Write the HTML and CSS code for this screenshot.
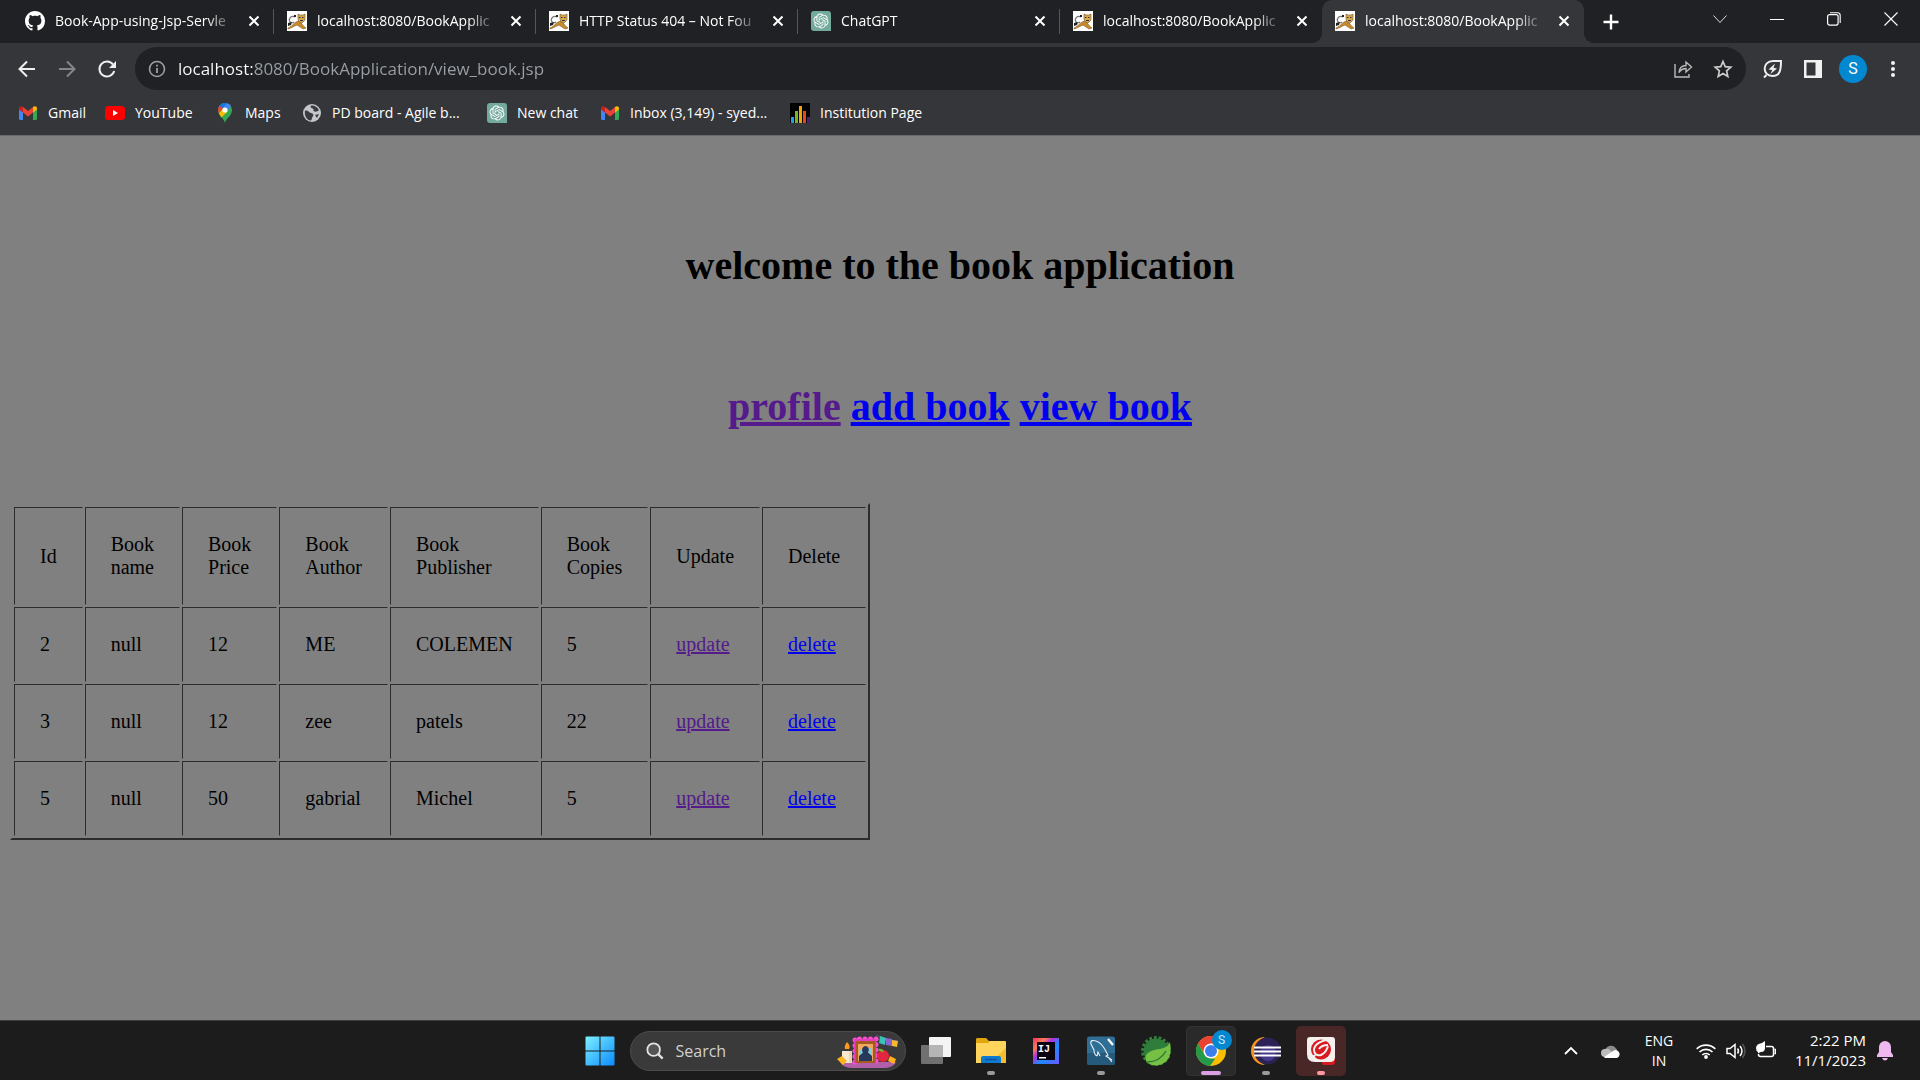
FILE: index.html
```html
<!DOCTYPE html>
<html lang="en">
<head>
<meta charset="utf-8">
<title>Book Application</title>
<link rel="stylesheet" href="styles.css">
</head>
<body>
<svg class="defs" aria-hidden="true">
  <symbol id="cat" viewBox="0 0 20 20">
    <path fill="#fff" d="M0 0h20v20H0z"/>
    <path fill="none" stroke="#777" stroke-width="1.2" d="M8 6C4 4 1 8 3 11c1 1 3 1 4 0"/>
    <path fill="#222" d="M1 12l4-1-1 3-3 1zM7 4h2v2H7z"/>
    <path fill="#c98a2b" stroke="#7a5a2a" stroke-width=".6" d="M1 17c3-1 5-4 8-6l3-1 3 3c1 2 3 3 4 4l-3 1c-2-1-4-3-6-4-3 1-5 3-9 4z"/>
    <path fill="#dba94a" stroke="#6b5632" stroke-width=".6" d="M11 3l2 1h3l2-1v6l-3 3-3-1-1-3z"/>
    <path fill="#333" d="M12 6h1.500v1H12zM15 6h1.500v1H15zM13 9h3v1h-3z"/>
  </symbol>
  <symbol id="gpt" viewBox="0 0 40 40">
    <path fill="#74aa9c" d="M6 0h28q6 0 6 6v34H6q-6 0-6-6V6q0-6 6-6z"/>
    <path fill="#fff" transform="translate(5 5) scale(1.25)" d="M22.2819 9.8211a5.9847 5.9847 0 0 0-.5157-4.9108 6.0462 6.0462 0 0 0-6.5098-2.9A6.0651 6.0651 0 0 0 4.9807 4.1818a5.9847 5.9847 0 0 0-3.9977 2.9 6.0462 6.0462 0 0 0 .7427 7.0966 5.98 5.98 0 0 0 .511 4.9107 6.051 6.051 0 0 0 6.5146 2.9001A5.9847 5.9847 0 0 0 13.2599 24a6.0557 6.0557 0 0 0 5.7718-4.2058 5.9894 5.9894 0 0 0 3.9977-2.9001 6.0557 6.0557 0 0 0-.7475-7.0729zm-9.022 12.6081a4.4755 4.4755 0 0 1-2.8764-1.0408l.1419-.0804 4.7783-2.7582a.7948.7948 0 0 0 .3927-.6813v-6.7369l2.02 1.1686a.071.071 0 0 1 .038.052v5.5826a4.504 4.504 0 0 1-4.4945 4.4944zm-9.6607-4.1254a4.4708 4.4708 0 0 1-.5346-3.0137l.142.0852 4.783 2.7582a.7712.7712 0 0 0 .7806 0l5.8428-3.3685v2.3324a.0804.0804 0 0 1-.0332.0615L9.74 19.9502a4.4992 4.4992 0 0 1-6.1408-1.6464zM2.3408 7.8956a4.485 4.485 0 0 1 2.3655-1.9728V11.6a.7664.7664 0 0 0 .3879.6765l5.8144 3.3543-2.0201 1.1685a.0757.0757 0 0 1-.071 0l-4.8303-2.7865A4.504 4.504 0 0 1 2.3408 7.872zm16.5963 3.8558L13.1038 8.364 15.1192 7.2a.0757.0757 0 0 1 .071 0l4.8303 2.7913a4.4944 4.4944 0 0 1-.6765 8.1042v-5.6772a.79.79 0 0 0-.407-.667zm2.0107-3.0231l-.142-.0852-4.7735-2.7818a.7759.7759 0 0 0-.7854 0L9.409 9.2297V6.8974a.0662.0662 0 0 1 .0284-.0615l4.8303-2.7866a4.4992 4.4992 0 0 1 6.6802 4.66zM8.3065 12.863l-2.02-1.1638a.0804.0804 0 0 1-.038-.0567V6.0742a4.4992 4.4992 0 0 1 7.3757-3.4537l-.142.0805L8.704 5.459a.7948.7948 0 0 0-.3927.6813zm1.0976-2.3654l2.602-1.4998 2.6069 1.4998v2.9994l-2.5974 1.4997-2.6067-1.4997Z"/>
  </symbol>
  <symbol id="gmail" viewBox="0 0 20 20">
    <path fill="#4285f4" d="M1 6l4 3v8H2.300Q1 17 1 15.700z"/>
    <path fill="#34a853" d="M19 6l-4 3v8h2.700Q19 17 19 15.700z"/>
    <path fill="#ea4335" d="M5 4l5 4 5-4v5.500l-5 4-5-4z"/>
    <path fill="#c5221f" d="M1 5.500C1 3 3.500 2.800 5 4v5.500L1 6.500z"/>
    <path fill="#fbbc04" d="M19 5.500C19 3 16.500 2.800 15 4v5.500l4-3z"/>
  </symbol>
  <symbol id="close" viewBox="0 0 12 12"><path fill="none" stroke="#fff" stroke-width="2" d="M1.500 1.500l9 9m0-9l-9 9"/></symbol>
</svg>

<header class="browser">
  <nav class="tabs" aria-label="Tabs">
    <div class="tab">
      <svg class="ico" viewBox="0 0 16 16"><path fill="#fff" d="M8 0C3.580 0 0 3.580 0 8c0 3.540 2.290 6.530 5.470 7.590.4.070.550-.170.550-.380 0-.190-.010-.820-.010-1.490-2.010.370-2.530-.490-2.690-.940-.090-.230-.480-.940-.820-1.130-.280-.150-.680-.520-.010-.530.630-.010 1.080.580 1.230.820.720 1.210 1.870.870 2.330.660.070-.520.280-.870.510-1.070-1.780-.2-3.640-.890-3.640-3.950 0-.870.310-1.590.820-2.150-.080-.2-.360-1.020.080-2.120 0 0 .670-.210 2.200.820.640-.180 1.320-.270 2-.270s1.360.090 2 .270c1.530-1.040 2.200-.820 2.200-.820.440 1.100.160 1.920.080 2.120.510.560.820 1.270.820 2.150 0 3.070-1.870 3.750-3.650 3.950.290.250.540.730.540 1.480 0 1.070-.010 1.930-.010 2.200 0 .210.150.460.550.380A8.010 8.010 0 0 0 16 8c0-4.420-3.580-8-8-8z"/></svg>
      <span class="title">Book-App-using-Jsp-Servle</span>
      <button class="close" aria-label="Close tab"><svg><use href="#close"/></svg></button>
    </div>
    <div class="tab"><svg class="ico"><use href="#cat"/></svg><span class="title">localhost:8080/BookApplic</span><button class="close" aria-label="Close tab"><svg><use href="#close"/></svg></button></div>
    <div class="tab"><svg class="ico"><use href="#cat"/></svg><span class="title">HTTP Status 404 – Not Fou</span><button class="close" aria-label="Close tab"><svg><use href="#close"/></svg></button></div>
    <div class="tab"><svg class="ico"><use href="#gpt"/></svg><span class="title">ChatGPT</span><button class="close" aria-label="Close tab"><svg><use href="#close"/></svg></button></div>
    <div class="tab last"><svg class="ico"><use href="#cat"/></svg><span class="title">localhost:8080/BookApplic</span><button class="close" aria-label="Close tab"><svg><use href="#close"/></svg></button></div>
    <div class="tab active"><svg class="ico"><use href="#cat"/></svg><span class="title">localhost:8080/BookApplic</span><button class="close" aria-label="Close tab"><svg><use href="#close"/></svg></button></div>
    <button class="newtab" aria-label="New tab"><svg viewBox="0 0 16 16"><path stroke="#fff" stroke-width="2.400" d="M8 .5v15M.5 8h15"/></svg></button>
    <div class="winctl">
      <button aria-label="Search tabs"><svg viewBox="0 0 14 14"><path fill="none" stroke="#ddd" d="M.5 3.500l6.500 7 6.500-7"/></svg></button>
      <button aria-label="Minimize"><svg viewBox="0 0 14 14"><path stroke="#fff" d="M0 7.500h14"/></svg></button>
      <button aria-label="Restore"><svg viewBox="0 0 14 14"><rect x=".6" y="2.600" width="10.500" height="10.500" rx="2" fill="none" stroke="#fff" stroke-width="1.200"/><path fill="none" stroke="#fff" stroke-width="1.100" d="M3 .8h7.500q2.700 0 2.700 2.700V11"/></svg></button>
      <button aria-label="Close window"><svg viewBox="0 0 14 14"><path stroke="#fff" stroke-width="1.100" d="M.5.5l13 13m0-13l-13 13"/></svg></button>
    </div>
  </nav>

  <div class="toolbar">
    <div class="navbtns">
      <button aria-label="Back"><svg viewBox="0 0 20 20"><path fill="none" stroke="#eee" stroke-width="2" d="M18 10H3M10 2.500L2.500 10l7.500 7.500"/></svg></button>
      <button aria-label="Forward"><svg viewBox="0 0 20 20"><path fill="none" stroke="#85868a" stroke-width="2" d="M2 10h15M10 2.500l7.500 7.500-7.500 7.500"/></svg></button>
      <button aria-label="Reload"><svg viewBox="0 0 20 20"><path fill="none" stroke="#eee" stroke-width="2" d="M17.200 12A7.500 7.500 0 1 1 16 5.500"/><path fill="#eee" d="M19 2v7h-7z"/></svg></button>
    </div>
    <div class="omnibox">
      <svg class="info" viewBox="0 0 20 20"><circle cx="10" cy="10" r="7.500" fill="none" stroke="#9aa0a6" stroke-width="1.600"/><path stroke="#9aa0a6" stroke-width="1.800" d="M10 9v5M10 5.800v1.800"/></svg>
      <input class="url" type="text" aria-label="Address" value="localhost:8080/BookApplication/view_book.jsp">
      <button aria-label="Share"><svg viewBox="0 0 20 20"><path fill="none" stroke="#bbb" stroke-width="1.400" d="M2 5v13h14v-3M6 13.500c.5-5 3-7 7-7V3l5.500 5-5.500 5V9.500c-3 0-5 1-7 4z"/></svg></button>
      <button aria-label="Bookmark"><svg viewBox="0 0 20 20"><path fill="none" stroke="#ccc" stroke-width="1.700" d="M10 2.500l2.200 5.200 5.600.5-4.200 3.700 1.200 5.500-4.800-2.900-4.800 2.900 1.200-5.500L2.200 8.200l5.600-.5z"/></svg></button>
    </div>
    <div class="tools">
      <button aria-label="Energy saver"><svg viewBox="0 0 20 20"><path fill="none" stroke="#eee" stroke-width="2" d="M1 18.500l2.500-2.500M18 2h-8C-1 2-1 17 9.500 17 16.500 17 18 12 18 2z"/><path fill="#eee" d="M12 4.500l-6.500 6 3.700.4L7.500 15l6.500-5.500-3.500-.7z"/></svg></button>
      <button aria-label="Side panel"><svg viewBox="0 0 20 20"><path fill="#f1f1f1" fill-rule="evenodd" d="M1 1h18v18H1zm2.500 2.500v13h9v-13z"/></svg></button>
      <button class="avatar" aria-label="Profile">S</button>
      <button aria-label="Menu"><svg viewBox="0 0 20 20"><g fill="#f1f1f1"><circle cx="10" cy="4" r="2"/><circle cx="10" cy="10" r="2"/><circle cx="10" cy="16" r="2"/></g></svg></button>
    </div>
  </div>

  <nav class="bookmarks" aria-label="Bookmarks">
    <a href="#"><svg><use href="#gmail"/></svg>Gmail</a>
    <a href="#"><svg viewBox="0 0 20 20"><rect y="3" width="20" height="14" rx="3.500" fill="#f00"/><path fill="#fff" d="M8 7l5 3-5 3z"/></svg>YouTube</a>
    <a href="#"><svg viewBox="0 0 20 20"><path fill="#34a853" d="M10 20C9 15 3 13 3 7a7 7 0 0 1 14 0c0 6-6 8-7 13z"/><path fill="#1a73e8" d="M4.500 2.700A7 7 0 0 1 12 .3L7.500 5.500z"/><path fill="#4285f4" d="M12 .3a7 7 0 0 1 4 3L11 9l-3-4z"/><path fill="#ea4335" d="M4.500 2.700L8 5.500l-4 4.700C2.500 7 3 4.500 4.500 2.700z"/><path fill="#fbbc04" d="M4 10.200L8 5.500l4 3.500-5.500 5.500C5.300 13 4.500 11.500 4 10.200z"/><circle cx="10" cy="7" r="2.600" fill="#fff"/></svg>Maps</a>
    <a href="#"><svg viewBox="0 0 20 20"><circle cx="10" cy="10" r="9" fill="#c4c7cc"/><path fill="#3a3b3f" d="M3 7.500c3-.5 4 2 6 2.500 2.500.5 3 2 1.500 4-1 1-.5 3-1.500 3.500C5 17.500 2 13 3 7.500zM9 2.500c-1 2 0 2.500 1.500 3 2 .5 0 2.500 2 3 2 .5 3-.5 4.500-1C16 4.500 13 2 9 2.500zM13 12l4-1-2 4z"/></svg>PD board - Agile b...</a>
    <a href="#"><svg><use href="#gpt"/></svg>New chat</a>
    <a href="#"><svg><use href="#gmail"/></svg>Inbox (3,149) - syed...</a>
    <a href="#"><svg viewBox="0 0 20 20"><path d="M0 0h20v20H0z"/><path fill="#1ba1e2" d="M1 14h3v6H1z"/><path fill="#7ab51d" d="M5 8h3v12H5z"/><path fill="#f0a30a" d="M9 3h3v17H9z"/><path fill="#e8471c" d="M13 8h3v12h-3z"/><path fill="#4b1e78" d="M17 14h3v6h-3z"/></svg>Institution Page</a>
  </nav>
</header>

<main class="page">
  <h1>welcome to the book application</h1>
  <h1 class="links"><a class="visited" href="#">profile</a> <a href="#">add book</a> <a href="#">view book</a></h1>
  <table class="books">
    <thead>
      <tr><th>Id</th><th>Book<br>name</th><th>Book<br>Price</th><th>Book<br>Author</th><th>Book<br>Publisher</th><th>Book<br>Copies</th><th>Update</th><th>Delete</th></tr>
    </thead>
    <tbody>
      <tr><td>2</td><td>null</td><td>12</td><td>ME</td><td>COLEMEN</td><td>5</td><td><a class="visited" href="#">update</a></td><td><a href="#">delete</a></td></tr>
      <tr><td>3</td><td>null</td><td>12</td><td>zee</td><td>patels</td><td>22</td><td><a class="visited" href="#">update</a></td><td><a href="#">delete</a></td></tr>
      <tr><td>5</td><td>null</td><td>50</td><td>gabrial</td><td>Michel</td><td>5</td><td><a class="visited" href="#">update</a></td><td><a href="#">delete</a></td></tr>
    </tbody>
  </table>
</main>

<footer class="taskbar">
  <div class="apps">
    <button class="app" aria-label="Start"><svg viewBox="0 0 30 30"><defs><linearGradient id="win" x1="0" y1="0" x2="1" y2="1"><stop offset="0" stop-color="#7df0ff"/><stop offset="1" stop-color="#0a8cff"/></linearGradient></defs><path fill="url(#win)" d="M1.500.5h13v14h-14v-13q0-1 1-1zM15.500.5h13q1 0 1 1v13h-14zM.5 15.500h14v14h-13q-1 0-1-1zM15.500 15.500h14v13q0 1-1 1h-13z"/></svg></button>
    <label class="search">
      <svg class="glass" viewBox="0 0 20 20"><circle cx="8.500" cy="8.500" r="7" fill="#555" stroke="#e4e4e4" stroke-width="2"/><path stroke="#e4e4e4" stroke-width="2.500" d="M13.500 13.500l5 5"/></svg>
      <input type="text" placeholder="Search" aria-label="Search">
      <svg class="art" viewBox="0 0 62 36">
        <path fill="#b05fa8" d="M3 29h56q-3 6-12 6H16Q6 35 3 29z"/>
        <path fill="none" stroke="#555b78" d="M39 2q10 6 22 6"/>
        <path fill="#37c4b4" d="M43 3l6 2-1 7-6-2z"/><path fill="#8a63d0" d="M49 5l6 1v7l-6-1z"/><path fill="#f5b931" d="M55 7l6 1-1 6-5-1z"/>
        <path fill="none" stroke="#fa4fd0" stroke-width="5" stroke-linecap="round" stroke-dasharray="0 5.500" d="M18 29V6h21v24"/>
        <path fill="#e83fc0" d="M17 6h22v24H17z"/>
        <path fill="#a65a22" d="M18.500 8h20v22h-20z"/><path fill="#f0a85e" d="M21 11h15v17H21z"/><path fill="#7fd0dc" d="M22 17l13-2v13H22z"/>
        <path fill="#26385c" d="M28 13a4 4 0 0 1 3 6.500l4 3.500v5H22v-5l4-3.500A4 4 0 0 1 28 13z"/>
        <path fill="#f6ead0" d="M5 18h10v12H5z"/><path fill="#e8d8b0" d="M12 18h3v12h-3z"/><path fill="#ff9a1a" d="M10 9q-3 4-2 7h4q2-3-2-7z"/>
        <circle cx="46" cy="23" r="6" fill="#e3263f"/><path fill="#7bb62e" d="M41 16q5-1 6 3-5 0-6-3z"/>
        <path fill="#ffb21a" d="M0 26l5-3 5 5-4 4zM51 28l2-5 6 3-2 5z"/>
      </svg>
    </label>
    <button class="app" aria-label="Task view"><svg viewBox="0 0 30 30"><rect x="8" y="1" width="22" height="20" rx="1" fill="#f4f4f4"/><rect y="9" width="22" height="19" rx="1" fill="#707070"/><path fill="#b5b5b5" d="M8 9h14v12H8z"/></svg></button>
    <button class="app run" aria-label="File Explorer"><svg viewBox="0 0 30 30"><path fill="#e2a50c" d="M1 2h9l3 3h16v6H0V3z"/><path fill="#ffd45a" d="M0 7h12l2-2h15q1 0 1 1v21H0z"/><path fill="#f5bd2c" d="M14 27L30 12v15z"/><path fill="#0f7bd0" d="M5 27v-5q0-2 2-2h16q2 0 2 2v5z"/><path stroke="#0a559c" stroke-width="1.500" d="M9 23.500h12"/></svg></button>
    <button class="app" aria-label="IntelliJ IDEA"><svg viewBox="0 0 30 30"><defs><linearGradient id="ij" x1="0" y1="0" x2="1" y2="1"><stop offset="0" stop-color="#fe315d"/><stop offset=".25" stop-color="#f97a5a"/><stop offset=".4" stop-color="#b030e0"/><stop offset=".6" stop-color="#1a8cff"/><stop offset="1" stop-color="#6b57ff"/></linearGradient></defs><path fill="url(#ij)" d="M2 2h26v26H2z"/><path fill="#0a0410" d="M6 6h18v18H6z"/><path fill="#fff" d="M8 21h7v1.500H8z"/><text class="ij" x="7" y="16">IJ</text></svg></button>
    <button class="app run" aria-label="MySQL Workbench"><svg viewBox="0 0 30 30"><rect x="1" y=".5" width="28" height="28.500" rx="2.500" fill="#2f6f96"/><path fill="#255a7c" d="M1 17h28v9.500q0 2.500-2.500 2.500h-23Q1 29 1 26.500z"/><path fill="none" stroke="#e8eef2" stroke-width="1.100" d="M11 20c-2-1-3-4-3-6L5 8C4 4 7 4 10 5c7 2 9 9 12 14l-2 1 6 4M11 20l1-4 2 4M22 21l4 5"/><path stroke="#fff" stroke-width="2.200" d="M22 3l5 6"/></svg></button>
    <button class="app" aria-label="Spring Tool Suite"><svg viewBox="0 0 30 30"><circle cx="15" cy="15" r="13.500" fill="none" stroke="#33803a" stroke-width="3" stroke-dasharray="2.800 1.900"/><circle cx="15" cy="15" r="12.500" fill="#2e7d3a"/><path fill="#76c043" d="M29 6c2 12-1 19-8 22-7 3-13 1-16-3C2 16 12 14 19 13c5-1 8-3 10-7z"/><path fill="none" stroke="#2e7d3a" stroke-width="1.500" d="M6 26c8 0 15-4 19-11"/></svg></button>
    <button class="app tile run wide" aria-label="Chrome"><svg viewBox="0 0 30 30"><circle cx="15" cy="15" r="15" fill="#fbbc04"/><path fill="#ea4335" d="M2 7.500A15 15 0 0 1 28 7.500H15v9H7.500z"/><path fill="#229a4a" d="M2 7.500L8.800 19 15 22l4 1-5 7A15 15 0 0 1 2 7.500z"/><circle cx="15" cy="15" r="7.500" fill="#fff"/><circle cx="15" cy="15" r="6" fill="#3b7ded"/></svg><span class="badge">S</span></button>
    <button class="app run" aria-label="Eclipse"><svg viewBox="0 0 30 30"><path fill="#f7941e" d="M14 1A14 14 0 0 0 14 29Q4 24 4 15T14 1z"/><circle cx="16.500" cy="15" r="13.500" fill="#2c2255"/><circle cx="17" cy="17" r="8" fill="#473a8c"/><path stroke="#fff" stroke-width="2" d="M3 11.500h27M3 15.500h27M3 19.500h27"/></svg></button>
    <button class="app alert run" aria-label="Trend Micro"><svg viewBox="0 0 30 30"><path fill="#d71920" d="M12 18h17v8q0 3-3 3h-9z"/><path fill="#f4f0ee" d="M4 1h22q3 0 3 3v17q0 5-5 5H9q-8 0-8-8V4q0-3 3-3z"/><circle cx="15" cy="13.500" r="10" fill="#d71920"/><path fill="none" stroke="#f4f0ee" stroke-width="2" d="M26 3C16 4 8 8 8 14c0 4 3 6 7 5 4-2 6-5 7-9M4 22c2 0 4-1 5-3M13 13c2-3 5-4 9-4"/></svg></button>
  </div>
  <div class="tray">
    <svg class="up" viewBox="0 0 14 14"><path fill="none" stroke="#fff" stroke-width="1.800" d="M1 10l6-6 6 6"/></svg>
    <svg class="cloud" viewBox="0 0 20 20"><path fill="#8b8b8b" d="M3 12C4 4 13 2 16 9l-8 4z"/><path fill="#bcbcbc" d="M4 16a4 4 0 0 1 0-8q4-1 6 2l6 6z"/><path fill="#fff" d="M3 16l9-6q3-2 5 0a4 4 0 0 1-1 7H4z"/></svg>
    <div class="lang">ENG<br>IN</div>
    <div class="status">
      <svg viewBox="0 0 20 20"><g fill="none" stroke="#fff" stroke-width="1.700"><path d="M.7 7.800a13.500 13.500 0 0 1 18.600 0M3.500 11a9.300 9.300 0 0 1 13 0M6.300 14a5.300 5.300 0 0 1 7.400 0"/></g><circle cx="10" cy="16" r="1.900" fill="#fff"/></svg>
      <svg viewBox="0 0 20 20"><g fill="none" stroke="#fff" stroke-width="1.500"><path d="M1 7.500h3L9 3.500v13l-5-4H1zM11.500 7.500q2 2.500 0 5M14 5q4 5 0 10"/><path stroke="#555" d="M16.500 3q5 7 0 14"/></g></svg>
      <svg viewBox="0 0 20 20"><path fill="none" stroke="#fff" stroke-width="1.500" d="M10 5.500h5.500q2 0 2 2v6q0 2-2 2h-11q-2 0-2-2V13M18.500 8.500h1v4h-1"/><path fill="#fff" d="M9 0v7q0 4-4 4-1 0-2 1l-1 .5V11Q0 10 0 7q0-4 6-5z"/></svg>
    </div>
    <div class="clock">2:22 PM<br>11/1/2023</div>
    <svg class="bell" viewBox="0 0 16 20"><path fill="#f0b8f0" d="M2 6a6 6 0 0 1 12 0v5l2 3v2H0v-2l2-3zM5 17h6q-1 2.500-3 2.500T5 17z"/></svg>
  </div>
</footer>
</body>
</html>
```
FILE: styles.css
```css
* { box-sizing: border-box; }

body {
  margin: 0;
  min-height: 100vh;
  display: flex;
  flex-direction: column;
  background: #808080;
  color: #000;
  font-family: "Liberation Serif", "Times New Roman", serif;
  font-size: 20px;
}

button {
  border: 0;
  padding: 0;
  background: none;
  display: flex;
  align-items: center;
  justify-content: center;
  flex: none;
}

svg { display: block; flex: none; }
.defs { position: absolute; width: 0; height: 0; }

.browser, .taskbar { font-family: "Open Sans", "Noto Sans", sans-serif; font-size: 14px; color: #fff; }
.browser { background: #35363a; border-bottom: 1px solid #67686b; }

/* Tab strip */
.tabs { display: flex; height: 43px; padding-left: 12px; background: #202124; }
.tab {
  flex: 0 1 262px;
  min-width: 0;
  display: flex;
  align-items: center;
  padding: 0 10px 2px 13px;
  position: relative;
}
.tab:not(.last):not(.active)::after {
  content: "";
  position: absolute;
  right: 0;
  top: 9px;
  width: 1px;
  height: 25px;
  background: #55565a;
}
.tab.active { background: #35363a; border-radius: 10px 10px 0 0; }
.tab.active::before, .tab.active::after {
  content: "";
  position: absolute;
  bottom: 0;
  width: 10px;
  height: 10px;
}
.tab.active::before { left: -10px; background: radial-gradient(circle at 0 0, #202124 10px, #35363a 10px); }
.tab.active::after { right: -10px; background: radial-gradient(circle at 100% 0, #202124 10px, #35363a 10px); }
.ico { width: 20px; height: 20px; }
.title {
  flex: 1;
  min-width: 0;
  margin: 0 8px 0 10px;
  overflow: hidden;
  white-space: nowrap;
  line-height: 20px;
  mask-image: linear-gradient(90deg, #000 calc(100% - 30px), transparent);
}
.close { width: 20px; height: 20px; }
.close svg { width: 12px; height: 12px; }
.newtab { width: 54px; }
.newtab svg { width: 16px; height: 16px; }
.winctl { display: flex; margin-left: auto; padding-right: 1px; height: 37px; }
.winctl button { width: 57px; }
.winctl svg { width: 14px; height: 14px; }

/* Address row */
.toolbar { display: flex; align-items: center; height: 51px; padding: 0 7px; }
.toolbar button { width: 40px; height: 40px; }
.toolbar svg { width: 20px; height: 20px; }
.navbtns { display: flex; width: 128px; }
.omnibox {
  flex: 1;
  display: flex;
  align-items: center;
  height: 43px;
  padding: 0 3px 0 12px;
  border-radius: 22px;
  background: #202124;
}
.url {
  flex: 1;
  min-width: 0;
  margin: 0 0 0 11px;
  padding: 0;
  border: 0;
  outline: 0;
  font: 17px/24px "Open Sans", "Noto Sans", sans-serif;
  color: #9aa0a6;
  background: linear-gradient(90deg, #fff 76px, #9aa0a6 76px);
  background-clip: text;
  -webkit-text-fill-color: transparent;
}
.tools { display: flex; align-items: center; width: 167px; padding-left: 7px; }
.toolbar .avatar {
  width: 28px;
  height: 28px;
  margin: 0 6px;
  border-radius: 50%;
  background: #0288d1;
  color: #fff;
  font: 16px Roboto, sans-serif;
}

/* Bookmarks */
.bookmarks {
  display: grid;
  grid-template-columns: 87px 110px 87px 185px 113px 190px auto;
  height: 41px;
  padding: 0 18px 4px;
  align-items: center;
  justify-content: start;
}
.bookmarks a { display: flex; align-items: center; gap: 10px; color: #fff; text-decoration: none; white-space: nowrap; line-height: 20px; }
.bookmarks svg { width: 20px; height: 20px; }

/* Page */
.page { flex: 1; padding: 107px 10px 0; }
h1 { margin: 0; font-size: 40px; line-height: 46px; text-align: center; }
.links { margin: 95px 0 73px; }
a { color: #00e; }
a.visited { color: #551a8b; }
.books {
  border: 2px solid;
  border-color: #808080 #2c2c2c #2c2c2c #808080;
  border-spacing: 2px;
  line-height: 23px;
}
.books th, .books td {
  padding: 25px;
  border: 1px solid;
  border-color: #2c2c2c #808080 #808080 #2c2c2c;
  font-weight: 400;
  text-align: left;
}

/* Taskbar */
.taskbar {
  display: grid;
  grid-template-columns: 1fr auto 1fr;
  align-items: center;
  height: 60px;
  border-top: 1px solid #3e3e3e;
  background: #1c1c1c;
}
.apps { grid-column: 2; display: flex; align-items: center; gap: 5px; }
.app { position: relative; width: 50px; height: 50px; border-radius: 5px; }
.app svg { width: 30px; height: 30px; }
.tile { background: #2a2a2a; box-shadow: inset 0 0 0 1px #333; }
.alert { background: #4a2727; }
.run::after {
  content: "";
  position: absolute;
  left: 21px;
  bottom: 1px;
  width: 8px;
  height: 4px;
  border-radius: 2px;
  background: #9a9a9a;
}
.wide::after { left: 15px; width: 20px; background: #dba0e4; }
.alert::after { background: #ff99a4; }
.badge {
  position: absolute;
  left: 26px;
  top: 4px;
  width: 20px;
  height: 20px;
  border-radius: 50%;
  background: #0288d1;
  color: #cfe8f6;
  font: 12px/20px Roboto, sans-serif;
}
.ij { fill: #fff; font: bold 10px "Liberation Mono", monospace; }
.search {
  display: flex;
  align-items: center;
  width: 276px;
  height: 40px;
  padding: 0 6px 0 15px;
  border: 1px solid #4c4c4c;
  border-radius: 20px;
  background: #3a3a3a;
}
.glass { width: 18px; height: 18px; }
.search input {
  flex: 1;
  min-width: 0;
  margin-left: 12px;
  padding: 0;
  border: 0;
  outline: 0;
  background: none;
  font: 16px/24px "Open Sans", "Noto Sans", sans-serif;
}
.search input::placeholder { color: #d0d0d0; opacity: 1; }
.art { width: 62px; height: 36px; }
.tray { justify-self: end; display: flex; align-items: center; padding-right: 27px; line-height: 20px; }
.up { width: 14px; height: 14px; margin-right: 23px; }
.cloud { width: 20px; height: 20px; margin-right: 20px; }
.lang { width: 36px; text-align: center; }
.status { display: flex; gap: 10px; margin-left: 19px; }
.status svg { width: 20px; height: 20px; }
.clock { width: 80px; margin: 0 11px 0 10px; padding-bottom: 2px; text-align: right; font-size: 15px; }
.bell { width: 16px; height: 20px; }
```
